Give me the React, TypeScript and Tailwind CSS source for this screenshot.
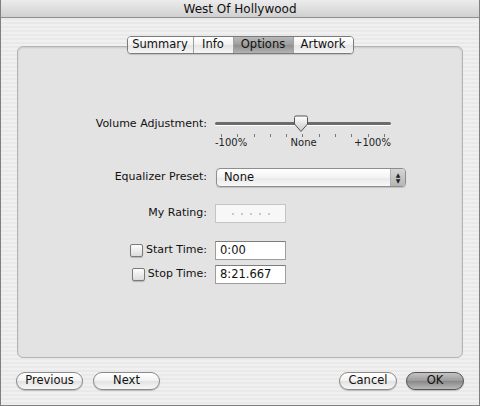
import React from "react";

const font = { fontFamily: '"Lucida Grande", "DejaVu Sans", Verdana, sans-serif' };

const tabs = ["Summary", "Info", "Options", "Artwork"];

function Tabs() {
  return (
    <div className="relative z-10 flex justify-center">
      <div className="flex h-[18px] overflow-hidden rounded-[4px] border border-[#7b7b7b] shadow-[0_1px_1px_rgba(0,0,0,0.15)]">
        {tabs.map((t, i) => (
          <div
            key={t}
            className={
              "flex items-center justify-center text-[11.5px] leading-none text-[#111] " +
              (i > 0 ? "border-l border-[#a0a0a0] " : "") +
              (t === "Options"
                ? "bg-[linear-gradient(#b9b9b9,#9c9c9c_50%,#8e8e8e_51%,#b3b3b3)] "
                : "bg-[linear-gradient(#ffffff,#f1f1f1_50%,#e4e4e4_51%,#f6f6f6)] ") +
              (t === "Summary" ? "w-[65px]" : t === "Info" ? "w-[40px]" : "w-[60px]")
            }
          >
            {t}
          </div>
        ))}
      </div>
    </div>
  );
}

function Slider() {
  const ticks = Array.from({ length: 11 });
  return (
    <div className="flex w-[176px] flex-col">
      <div className="relative h-[16px]">
        <div className="absolute left-0 right-0 top-[6px] h-[3px] rounded-full bg-[#6c6c6c] shadow-[0_1px_0_#fff]" />
        <svg className="absolute left-[77px] top-[-1px]" width="18" height="18" viewBox="0 0 18 18">
          <defs>
            <linearGradient id="thumb" x1="0" y1="0" x2="0" y2="1">
              <stop offset="0" stopColor="#ffffff" />
              <stop offset="1" stopColor="#c9c9c9" />
            </linearGradient>
          </defs>
          <path d="M2.5 2.5 Q2.5 1 4 1 H14 Q15.5 1 15.5 2.5 V9 L9 16.5 L2.5 9 Z" fill="url(#thumb)" stroke="#555" strokeWidth="1" />
        </svg>
      </div>
      <div className="flex justify-between px-[6px] pt-[2px]">
        {ticks.map((_, i) => (
          <div key={i} className="h-[3px] w-px bg-[#777]" />
        ))}
      </div>
      <div className="mt-[1px] flex justify-between text-[10px] leading-none text-[#222]">
        <span>-100%</span>
        <span className="pl-[6px]">None</span>
        <span>+100%</span>
      </div>
    </div>
  );
}

function Check() {
  return (
    <div className="h-[13px] w-[13px] rounded-[2px] border border-[#7a7a7a] bg-[linear-gradient(#fdfdfd,#dcdcdc)] shadow-[0_1px_1px_rgba(0,0,0,0.2)]" />
  );
}

function Field({ value }: { value: string }) {
  return (
    <div className="flex h-[19px] w-[71px] items-center border border-[#9d9d9d] border-t-[#7d7d7d] bg-white px-[4px] text-[11.5px] text-[#111]">
      {value}
    </div>
  );
}

function Pill({ label, dark }: { label: string; dark?: boolean }) {
  return (
    <div
      className={
        "flex h-[18px] items-center justify-center rounded-full border text-[11.5px] text-[#111] shadow-[0_1px_1px_rgba(0,0,0,0.2)] " +
        (dark
          ? "w-[58px] border-[#555] bg-[linear-gradient(#c4c4c4,#9a9a9a_50%,#888_51%,#b9b9b9)]"
          : "border-[#8a8a8a] bg-[linear-gradient(#ffffff,#f1f1f1_50%,#e2e2e2_51%,#f7f7f7)]")
      }
    >
      {label}
    </div>
  );
}

export default function App() {
  return (
    <div
      style={font}
      className="flex h-[406px] w-[480px] flex-col overflow-hidden border-x border-b border-[#7f7f7f] bg-[repeating-linear-gradient(#f0f0f0_0px,#f0f0f0_2px,#e9e9e9_2px,#e9e9e9_4px)]"
    >
      <div className="flex h-[18px] shrink-0 items-center justify-center border-b border-[#8f8f8f] bg-[linear-gradient(#ececec,#d0d0d0)] text-[12px] text-[#111]">
        West Of Hollywood
      </div>

      <div className="mt-[18px] px-[16px]">
        <Tabs />
        <div className="-mt-[8px] h-[312px] rounded-[6px] border border-[#b4b4b4] bg-[#e3e3e3] text-[11px] text-[#111] shadow-[inset_0_1px_2px_rgba(0,0,0,0.12)]">
          <div className="mt-[69px] flex items-start">
            <div className="w-[189px] text-right">Volume Adjustment:</div>
            <div className="ml-[8px]">
              <Slider />
            </div>
          </div>

          <div className="mt-[20px] flex items-center">
            <div className="w-[189px] text-right">Equalizer Preset:</div>
            <div className="ml-[9px] flex h-[19px] w-[190px] items-center overflow-hidden rounded-[4px] border border-[#8d8d8d] bg-[linear-gradient(#ffffff,#f3f3f3_50%,#e8e8e8_51%,#f8f8f8)] text-[11.5px] shadow-[0_1px_1px_rgba(0,0,0,0.15)]">
              <span className="flex-1 pl-[7px]">None</span>
              <div className="flex h-full w-[15px] flex-col items-center justify-center border-l border-[#b0b0b0] bg-[linear-gradient(#d6d6d6,#b5b5b5)] text-[6px] leading-[6px] text-[#222]">
                <span>▲</span>
                <span>▼</span>
              </div>
            </div>
          </div>

          <div className="mt-[17px] flex items-center">
            <div className="w-[189px] text-right text-[#111]">My Rating:</div>
            <div className="ml-[8px] flex h-[19px] w-[71px] items-center justify-center gap-[7px] border border-[#c4c4c4] bg-[#f7f7f7]">
              {[0, 1, 2, 3, 4].map((i) => (
                <span key={i} className="h-[2px] w-[2px] rounded-full bg-[#b8b8b8]" />
              ))}
            </div>
          </div>

          <div className="mt-[18px] flex items-center">
            <div className="flex w-[189px] items-center justify-end gap-[3px]">
              <Check />
              <span>Start Time:</span>
            </div>
            <div className="ml-[8px]">
              <Field value="0:00" />
            </div>
          </div>

          <div className="mt-[5px] flex items-center">
            <div className="flex w-[189px] items-center justify-end gap-[3px]">
              <Check />
              <span>Stop Time:</span>
            </div>
            <div className="ml-[8px]">
              <Field value="8:21.667" />
            </div>
          </div>
        </div>
      </div>

      <div className="mt-[14px] flex items-center px-[15px]">
        <div className="w-[67px]">
          <Pill label="Previous" />
        </div>
        <div className="ml-[10px] w-[67px]">
          <Pill label="Next" />
        </div>
        <div className="ml-auto w-[58px]">
          <Pill label="Cancel" />
        </div>
        <div className="ml-[9px]">
          <Pill label="OK" dark />
        </div>
      </div>
    </div>
  );
}
